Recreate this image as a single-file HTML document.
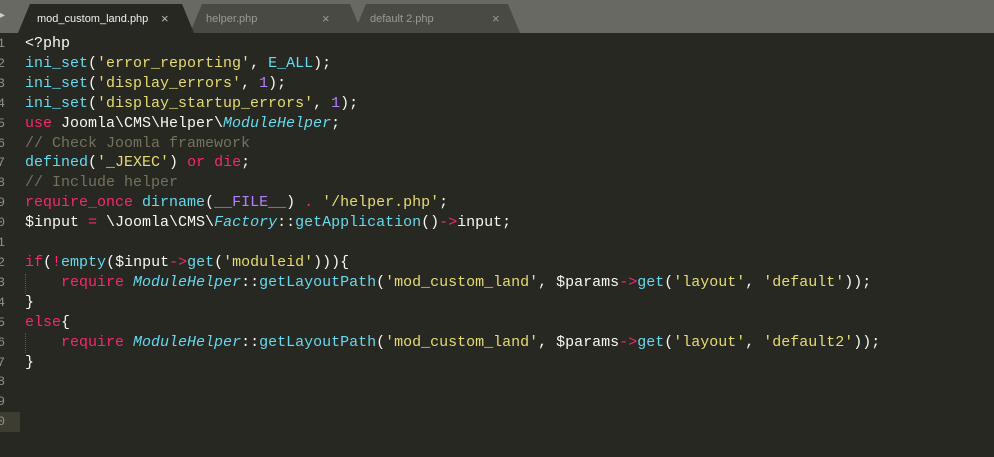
<!DOCTYPE html><html><head><style>
body{margin:0;width:994px;height:457px;background:#272822;overflow:hidden;position:relative;font-family:"Liberation Sans",sans-serif}
.bar{position:absolute;left:0;top:0;width:994px;height:33px;background:#686962}
.tab{position:absolute;top:4px;height:29px;clip-path:polygon(12px 0,calc(100% - 12px) 0,100% 100%,0 100%)}
.tab span{position:absolute;top:9px;font-size:11px}
.tab i{position:absolute;top:7px;font-style:normal;font-size:13px;color:#9a9a95}
.code{position:absolute;left:25px;top:34px;font-family:"Liberation Mono",monospace;font-size:15px;line-height:19.9px;color:#f8f8f2;white-space:pre}
.gut{position:absolute;left:0;top:34px;font-family:"Liberation Mono",monospace;font-size:13px;line-height:19.9px;color:#8f908a;white-space:pre;text-align:right;width:5px;overflow:hidden;direction:rtl}
.k{color:#f92672}.f{color:#66d9ef}.s{color:#e6db74}.n{color:#ae81ff}.c{color:#75715e}.t{color:#66d9ef;font-style:italic}
</style></head><body>
<div class="bar"></div>
<div style="position:absolute;left:0;top:10px;color:#ccc;font-size:10px">&#9656;</div>
<div class="tab" style="left:354px;width:166px;background:#4a4a45"><span style="left:16px;color:#9a9a95">default 2.php</span><i style="left:138px">×</i></div>
<div class="tab" style="left:190px;width:172px;background:#4a4a45"><span style="left:16px;color:#9a9a95">helper.php</span><i style="left:132px">×</i></div>
<div class="tab" style="left:18px;width:176px;background:#272822"><span style="left:19px;color:#f0f0f0">mod_custom_land.php</span><i style="left:143px;color:#bbb">×</i></div>
<div style="position:absolute;left:0;top:412px;width:20px;height:20px;background:#3e3d32"></div>
<div style="position:absolute;left:25px;top:274px;height:20px;border-left:1px dotted #555"></div>
<div style="position:absolute;left:25px;top:333px;height:20px;border-left:1px dotted #555"></div>
<div class="gut">1
2
3
4
5
6
7
8
9
0
1
2
3
4
5
6
7
8
9
0</div>
<div class="code">&lt;?php
<span class="f">ini_set</span>(<span class="s">'error_reporting'</span>, <span class="f">E_ALL</span>);
<span class="f">ini_set</span>(<span class="s">'display_errors'</span>, <span class="n">1</span>);
<span class="f">ini_set</span>(<span class="s">'display_startup_errors'</span>, <span class="n">1</span>);
<span class="k">use</span> Joomla\CMS\Helper\<span class="t">ModuleHelper</span>;
<span class="c">// Check Joomla framework</span>
<span class="f">defined</span>(<span class="s">'_JEXEC'</span>) <span class="k">or</span> <span class="k">die</span>;
<span class="c">// Include helper</span>
<span class="k">require_once</span> <span class="f">dirname</span>(<span class="n">__FILE__</span>) <span class="k">.</span> <span class="s">'/helper.php'</span>;
$input <span class="k">=</span> \Joomla\CMS\<span class="t">Factory</span>::<span class="f">getApplication</span>()<span class="k">-&gt;</span>input;

<span class="k">if</span>(<span class="k">!</span><span class="f">empty</span>($input<span class="k">-&gt;</span><span class="f">get</span>(<span class="s">'moduleid'</span>))){
    <span class="k">require</span> <span class="t">ModuleHelper</span>::<span class="f">getLayoutPath</span>(<span class="s">'mod_custom_land'</span>, $params<span class="k">-&gt;</span><span class="f">get</span>(<span class="s">'layout'</span>, <span class="s">'default'</span>));
}
<span class="k">else</span>{
    <span class="k">require</span> <span class="t">ModuleHelper</span>::<span class="f">getLayoutPath</span>(<span class="s">'mod_custom_land'</span>, $params<span class="k">-&gt;</span><span class="f">get</span>(<span class="s">'layout'</span>, <span class="s">'default2'</span>));
}</div>
</body></html>
